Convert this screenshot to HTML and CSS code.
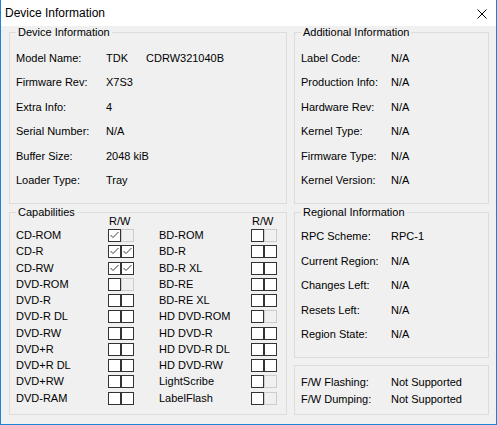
FILE: index.html
```html
<!DOCTYPE html>
<html>
<head>
<meta charset="utf-8">
<title>Device Information</title>
<link rel="stylesheet" href="styles.css">
</head>
<body>
<div class="window">
  <div class="titlebar">
    <span class="title">Device Information</span>
    <svg class="close" width="10" height="10" viewBox="0 0 10 10"><path d="M0.5 0.5 L9.5 9.5 M9.5 0.5 L0.5 9.5" stroke="#000" stroke-width="1" fill="none"/></svg>
  </div>
  <div class="content">
    <div class="col col-left">
      <section class="group g-device">
        <div class="legend">Device Information</div>
        <div class="rows rows-top">
          <div class="row"><span class="label">Model Name:</span><span class="value"><span class="vendor">TDK</span>CDRW321040B</span></div>
          <div class="row"><span class="label">Firmware Rev:</span><span class="value">X7S3</span></div>
          <div class="row"><span class="label">Extra Info:</span><span class="value">4</span></div>
          <div class="row"><span class="label">Serial Number:</span><span class="value">N/A</span></div>
          <div class="row"><span class="label">Buffer Size:</span><span class="value">2048 kiB</span></div>
          <div class="row"><span class="label">Loader Type:</span><span class="value">Tray</span></div>
        </div>
      </section>
      <section class="group g-caps">
        <div class="legend">Capabilities</div>
        <div class="caps">
          <div class="caplist">
            <span></span><span class="rw">R/W</span>
            <span class="cap">CD-ROM</span><span class="pair"><span class="cb on chk"><svg viewBox="0 0 11 11"><path d="M1.5 5 L4 7.5 L9.5 2"/></svg></span><span class="cb off"></span></span>
            <span class="cap">CD-R</span><span class="pair"><span class="cb on chk"><svg viewBox="0 0 11 11"><path d="M1.5 5 L4 7.5 L9.5 2"/></svg></span><span class="cb on chk"><svg viewBox="0 0 11 11"><path d="M1.5 5 L4 7.5 L9.5 2"/></svg></span></span>
            <span class="cap">CD-RW</span><span class="pair"><span class="cb on chk"><svg viewBox="0 0 11 11"><path d="M1.5 5 L4 7.5 L9.5 2"/></svg></span><span class="cb on chk"><svg viewBox="0 0 11 11"><path d="M1.5 5 L4 7.5 L9.5 2"/></svg></span></span>
            <span class="cap">DVD-ROM</span><span class="pair"><span class="cb on"></span><span class="cb off"></span></span>
            <span class="cap">DVD-R</span><span class="pair"><span class="cb on"></span><span class="cb on"></span></span>
            <span class="cap">DVD-R DL</span><span class="pair"><span class="cb on"></span><span class="cb on"></span></span>
            <span class="cap">DVD-RW</span><span class="pair"><span class="cb on"></span><span class="cb on"></span></span>
            <span class="cap">DVD+R</span><span class="pair"><span class="cb on"></span><span class="cb on"></span></span>
            <span class="cap">DVD+R DL</span><span class="pair"><span class="cb on"></span><span class="cb on"></span></span>
            <span class="cap">DVD+RW</span><span class="pair"><span class="cb on"></span><span class="cb on"></span></span>
            <span class="cap">DVD-RAM</span><span class="pair"><span class="cb on"></span><span class="cb on"></span></span>
          </div>
          <div class="caplist">
            <span></span><span class="rw">R/W</span>
            <span class="cap">BD-ROM</span><span class="pair"><span class="cb on"></span><span class="cb off"></span></span>
            <span class="cap">BD-R</span><span class="pair"><span class="cb on"></span><span class="cb on"></span></span>
            <span class="cap">BD-R XL</span><span class="pair"><span class="cb on"></span><span class="cb on"></span></span>
            <span class="cap">BD-RE</span><span class="pair"><span class="cb on"></span><span class="cb on"></span></span>
            <span class="cap">BD-RE XL</span><span class="pair"><span class="cb on"></span><span class="cb on"></span></span>
            <span class="cap">HD DVD-ROM</span><span class="pair"><span class="cb on"></span><span class="cb off"></span></span>
            <span class="cap">HD DVD-R</span><span class="pair"><span class="cb on"></span><span class="cb on"></span></span>
            <span class="cap">HD DVD-R DL</span><span class="pair"><span class="cb on"></span><span class="cb on"></span></span>
            <span class="cap">HD DVD-RW</span><span class="pair"><span class="cb on"></span><span class="cb on"></span></span>
            <span class="cap">LightScribe</span><span class="pair"><span class="cb on"></span><span class="cb off"></span></span>
            <span class="cap">LabelFlash</span><span class="pair"><span class="cb on"></span><span class="cb off"></span></span>
          </div>
        </div>
      </section>
    </div>
    <div class="col col-right">
      <section class="group g-addl">
        <div class="legend">Additional Information</div>
        <div class="rows rows-top">
          <div class="row"><span class="label">Label Code:</span><span class="value">N/A</span></div>
          <div class="row"><span class="label">Production Info:</span><span class="value">N/A</span></div>
          <div class="row"><span class="label">Hardware Rev:</span><span class="value">N/A</span></div>
          <div class="row"><span class="label">Kernel Type:</span><span class="value">N/A</span></div>
          <div class="row"><span class="label">Firmware Type:</span><span class="value">N/A</span></div>
          <div class="row"><span class="label">Kernel Version:</span><span class="value">N/A</span></div>
        </div>
      </section>
      <section class="group g-region">
        <div class="legend">Regional Information</div>
        <div class="rows rows-region">
          <div class="row"><span class="label">RPC Scheme:</span><span class="value">RPC-1</span></div>
          <div class="row"><span class="label">Current Region:</span><span class="value">N/A</span></div>
          <div class="row"><span class="label">Changes Left:</span><span class="value">N/A</span></div>
          <div class="row"><span class="label">Resets Left:</span><span class="value">N/A</span></div>
          <div class="row"><span class="label">Region State:</span><span class="value">N/A</span></div>
        </div>
      </section>
      <section class="group g-fw">
        <div class="rows rows-fw">
          <div class="row"><span class="label">F/W Flashing:</span><span class="value">Not Supported</span></div>
          <div class="row"><span class="label">F/W Dumping:</span><span class="value">Not Supported</span></div>
        </div>
      </section>
    </div>
  </div>
</div>
</body>
</html>
```

FILE: styles.css
```css
* {
  box-sizing: border-box;
}

html,
body {
  margin: 0;
  padding: 0;
}

body {
  width: 497px;
  height: 425px;
  font-family: "Liberation Sans", Arial, sans-serif;
  font-size: 11px;
  color: #000;
  background: #f0f0f0;
  overflow: hidden;
}

.window {
  width: 497px;
  height: 425px;
  border: 1px solid #1883d7;
  border-top: none;
  background: #f0f0f0;
  display: flex;
  flex-direction: column;
}

.titlebar {
  flex: none;
  height: 26px;
  background: #fff;
  display: flex;
  align-items: center;
  padding-left: 4px;
  font-size: 12px;
}

.close {
  margin-left: auto;
  margin-right: 9px;
  align-self: flex-start;
  margin-top: 9px;
}

.content {
  flex: 1;
  display: flex;
  gap: 7px;
  padding: 6px 7px 0 8px;
}

.col {
  display: flex;
  flex-direction: column;
}

.col-left {
  width: 278px;
  gap: 8px;
}

.col-right {
  width: 195px;
  gap: 8px;
}

.group {
  border: 1px solid #dcdcdc;
  display: flex;
  flex-direction: column;
}

.g-device,
.g-addl {
  height: 172px;
}

.g-caps {
  height: 203px;
}

.g-region {
  height: 146px;
}

.g-fw {
  height: 50px;
  margin-top: -1px;
}

.legend {
  align-self: flex-start;
  margin: -7px 0 0 6px;
  padding: 0 2px;
  line-height: 13px;
  height: 13px;
  background: #f0f0f0;
}

.rows {
  padding-left: 6px;
}

.rows-top {
  padding-top: 7px;
}

.rows-top .row {
  height: 24.4px;
  line-height: 24.4px;
}

.rows-region {
  padding-top: 5px;
}

.rows-region .row {
  height: 24.5px;
  line-height: 24.5px;
}

.rows-fw {
  padding-top: 7.5px;
}

.rows-fw .row {
  height: 17px;
  line-height: 17px;
}

.row {
  display: flex;
  white-space: nowrap;
}

.label {
  width: 90px;
  flex: none;
}

.vendor {
  display: inline-block;
  width: 40px;
}

.caps {
  display: flex;
  gap: 25px;
  padding-left: 6px;
  margin-top: -4px;
}

.caplist {
  display: grid;
  grid-template-columns: 92px 26px;
  grid-template-rows: 12px repeat(11, 16.27px);
  line-height: 12px;
}

.caplist .cap {
  line-height: 16.27px;
  white-space: nowrap;
}

.rw {
  padding-left: 1px;
  line-height: 12px;
}

.pair {
  display: flex;
  align-self: start;
  margin-top: 2px;
}

.cb {
  width: 13px;
  height: 13px;
  border: 1px solid #333;
  background: #fff;
  display: block;
}

.cb.off {
  border-color: #cccccc;
  background: #f0f0f0;
}

.cb svg {
  display: block;
  width: 11px;
  height: 11px;
}

.cb svg path {
  fill: none;
  stroke: #3c3c3c;
  stroke-width: 1;
}
```
